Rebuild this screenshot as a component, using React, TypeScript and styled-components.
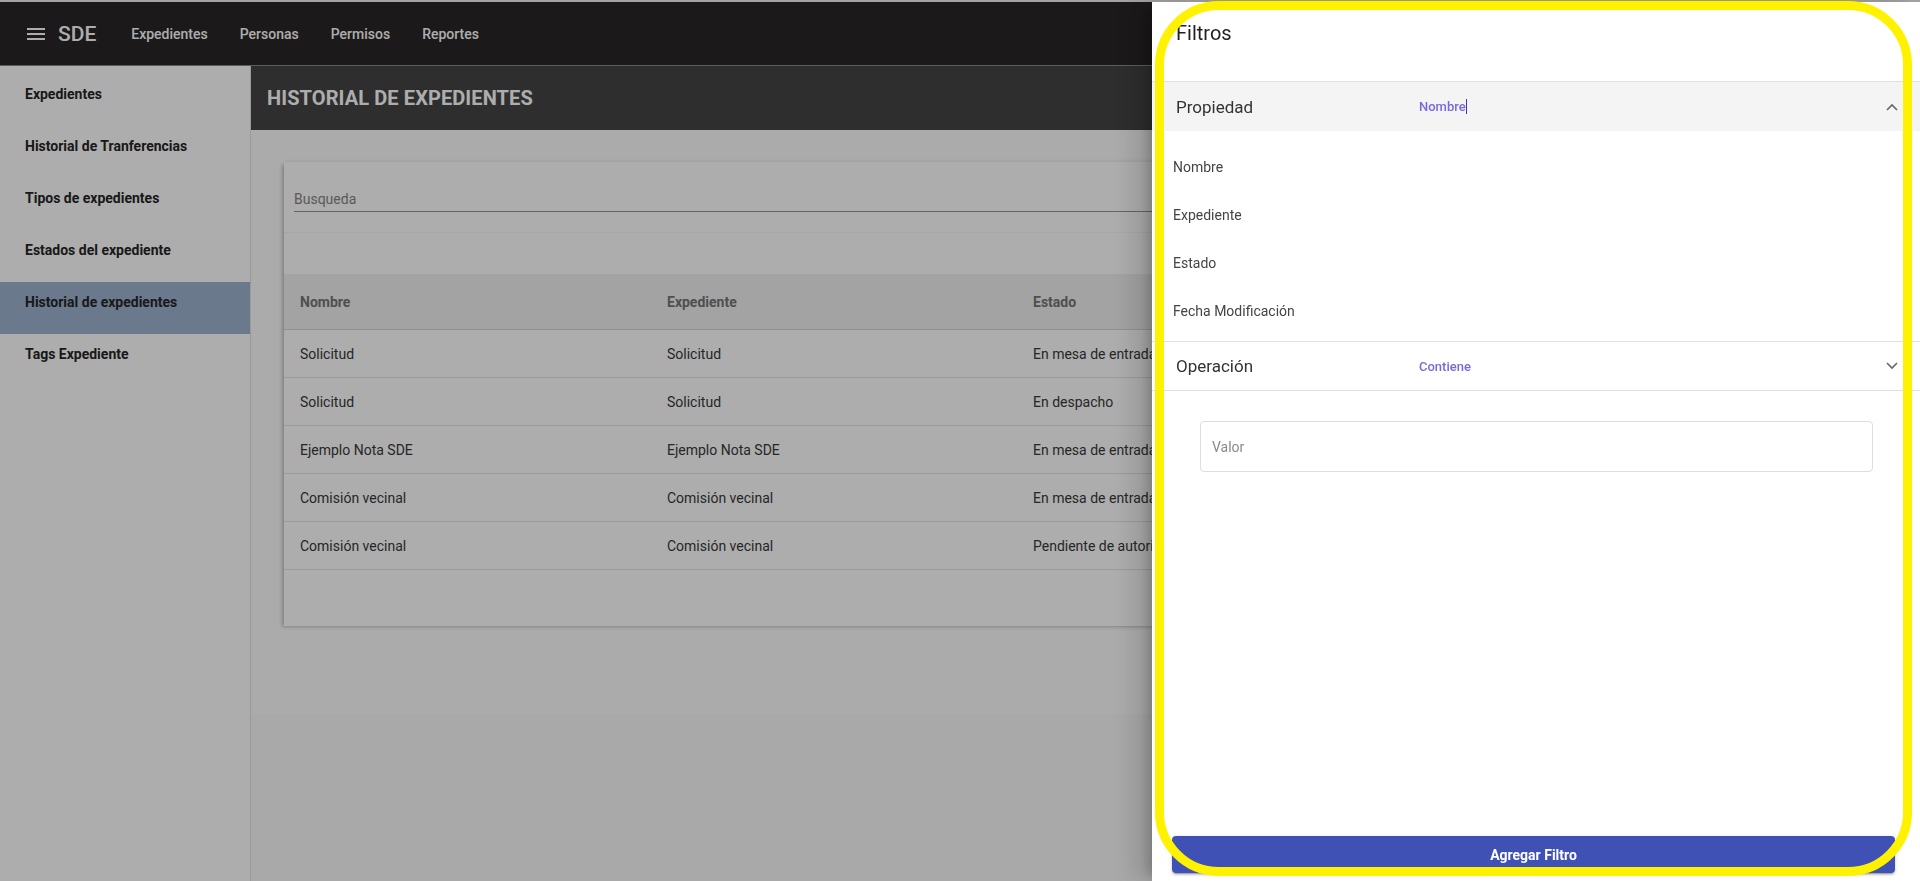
import React from 'react';
import styled, { createGlobalStyle } from 'styled-components';

const GlobalStyle = createGlobalStyle`
  html, body {
    margin: 0;
    padding: 0;
    height: 100%;
    overflow: hidden;
    font-family: Roboto, "Liberation Sans", sans-serif;
  }
  * {
    box-sizing: border-box;
  }
`;

const Page = styled.div`
  height: 881px;
  display: flex;
  flex-direction: column;
  background: #f9f9f9;
`;

const TopStrip = styled.div`
  height: 2px;
  background: #f2f2f2;
`;

const Navbar = styled.header`
  height: 64px;
  background: #282525;
  border-bottom: 1px solid #8a8a8a;
  display: flex;
  align-items: center;
  padding-left: 27px;
  color: #fff;
`;

const Brand = styled.span`
  font-size: 21px;
  font-weight: 500;
  margin-left: 13px;
  margin-right: 35px;
`;

const NavLink = styled.a`
  font-size: 14px;
  font-weight: 500;
  color: #fff;
  margin-right: 32px;
  text-decoration: none;
`;

const Body = styled.div`
  flex: 1;
  display: flex;
  min-height: 0;
`;

const Sidebar = styled.nav`
  width: 251px;
  background: #fff;
  border-right: 1px solid #e4e4e4;
  padding-top: 8px;
`;

const SideItem = styled.div<{ active?: boolean }>`
  height: 52px;
  padding: 12px 25px 0;
  line-height: 16px;
  font-size: 14px;
  font-weight: 700;
  color: #262626;
  background: ${(p) => (p.active ? '#9db3ce' : 'transparent')};
`;

const Main = styled.main`
  flex: 1;
  display: flex;
  flex-direction: column;
  min-width: 0;
`;

const TitleBar = styled.div`
  height: 64px;
  background: #444;
  display: flex;
  align-items: center;
  padding-left: 16px;
`;

const Title = styled.h1`
  margin: 0;
  font-size: 20px;
  font-weight: 700;
  color: #fff;
  letter-spacing: 0.1px;
`;

const Content = styled.div`
  height: 584px;
  background: #fdfdfd;
  padding: 32px 33px 0;
  overflow: hidden;
`;

const Card = styled.section`
  background: #fff;
  box-shadow: -3px 2px 4px -1px rgba(0, 0, 0, 0.22), 0 -1px 4px rgba(0, 0, 0, 0.08);
  padding-bottom: 56px;
`;

const SearchWrap = styled.div`
  padding: 24px 10px 0;
`;

const SearchInput = styled.input`
  width: 100%;
  height: 26px;
  border: none;
  border-bottom: 1px solid #949494;
  background: transparent;
  font-family: Roboto, sans-serif;
  font-size: 14px;
  padding: 0;
  outline: none;
  &::placeholder {
    color: #858585;
  }
`;

const Toolbar = styled.div`
  height: 42px;
  margin-top: 20px;
  background: #fff;
  border-top: 1px solid #f6f6f6;
`;

const Row = styled.div<{ head?: boolean }>`
  display: grid;
  grid-template-columns: 367px 366px 366px 1fr;
  height: ${(p) => (p.head ? '56px' : '48px')};
  align-items: center;
  background: ${(p) => (p.head ? '#f0f0f0' : '#fff')};
  border-bottom: 1px solid ${(p) => (p.head ? '#d6d6d6' : '#e3e3e3')};
  font-size: 14px;
  font-weight: ${(p) => (p.head ? 700 : 400)};
  color: ${(p) => (p.head ? '#757575' : '#383838')};
`;

const Cell = styled.div`
  padding-left: 16px;
  white-space: nowrap;
  overflow: hidden;
`;

const Backdrop = styled.div`
  position: fixed;
  inset: 0;
  background: rgba(0, 0, 0, 0.32);
`;

const Drawer = styled.aside`
  position: fixed;
  top: 2px;
  right: 0;
  bottom: 0;
  width: 768px;
  background: #fff;
  display: flex;
  flex-direction: column;
  box-shadow: -8px 0 10px -5px rgba(0, 0, 0, 0.2), -16px 0 24px 2px rgba(0, 0, 0, 0.14);
`;

const DrawerTitle = styled.div`
  height: 80px;
  padding: 19px 24px 0;
  font-size: 20px;
  line-height: 24px;
  color: #222;
  border-bottom: 1px solid #e0e0e0;
`;

const PanelHeader = styled.div<{ open?: boolean }>`
  height: 49px;
  display: flex;
  align-items: center;
  padding: 0 22px 0 24px;
  background: ${(p) => (p.open ? '#f4f4f4' : '#fff')};
  border-bottom: ${(p) => (p.open ? 'none' : '1px solid #e0e0e0')};
`;

const PanelLabel = styled.span`
  width: 243px;
  font-size: 17px;
  color: #333;
`;

const PanelValue = styled.span`
  flex: 1;
  font-size: 13px;
  font-weight: 500;
  color: #7b68de;
`;

const Caret = styled.span`
  display: inline-block;
  width: 1px;
  height: 15px;
  background: #3a3aa0;
  vertical-align: -3px;
`;

const PanelBody = styled.div`
  padding: 12px 0 6px;
  border-bottom: 1px solid #e0e0e0;
`;

const Option = styled.div`
  height: 48px;
  display: flex;
  align-items: center;
  padding-left: 21px;
  font-size: 14px;
  color: #444;
`;

const ValueWrap = styled.div`
  padding: 30px 47px 0 48px;
`;

const ValueInput = styled.input`
  width: 100%;
  height: 51px;
  border: 1px solid #dedede;
  border-radius: 4px;
  padding: 0 11px;
  font-family: Roboto, sans-serif;
  font-size: 14px;
  outline: none;
  &::placeholder {
    color: #8a8a8a;
  }
`;

const Spacer = styled.div`
  flex: 1;
`;

const AddButton = styled.button`
  height: 37px;
  margin: 0 25px 8px 20px;
  border: none;
  border-radius: 4px;
  background: #3f51b5;
  color: #fff;
  font-family: Roboto, sans-serif;
  font-size: 14px;
  font-weight: 700;
  box-shadow: 0 3px 1px -2px rgba(0, 0, 0, 0.2), 0 2px 2px rgba(0, 0, 0, 0.14), 0 1px 5px rgba(0, 0, 0, 0.12);
`;

const Highlight = styled.div`
  position: fixed;
  left: 1155px;
  top: 1px;
  width: 757px;
  height: 875px;
  border: 9px solid #fff200;
  border-radius: 64px;
  pointer-events: none;
`;

const Menu = () => (
  <svg width="18" height="12" viewBox="0 0 18 12">
    <path d="M0 1h18M0 6h18M0 11h18" stroke="#fff" strokeWidth="2" />
  </svg>
);

const Chevron = ({ up }: { up?: boolean }) => (
  <svg width="12" height="8" viewBox="0 0 12 8">
    <path
      d={up ? 'M1 7l5-5 5 5' : 'M1 1l5 5 5-5'}
      fill="none"
      stroke="#666"
      strokeWidth="1.6"
    />
  </svg>
);

const rows = [
  ['Solicitud', 'Solicitud', 'En mesa de entrada', '12/03/2021'],
  ['Solicitud', 'Solicitud', 'En despacho', '12/03/2021'],
  ['Ejemplo Nota SDE', 'Ejemplo Nota SDE', 'En mesa de entrada', '10/03/2021'],
  ['Comisión vecinal', 'Comisión vecinal', 'En mesa de entrada', '08/03/2021'],
  ['Comisión vecinal', 'Comisión vecinal', 'Pendiente de autorización', '08/03/2021'],
];

const sideItems = [
  'Expedientes',
  'Historial de Tranferencias',
  'Tipos de expedientes',
  'Estados del expediente',
  'Historial de expedientes',
  'Tags Expediente',
];

const App: React.FC = () => {
  return (
    <>
      <GlobalStyle />
      <Page>
        <TopStrip />
        <Navbar>
          <Menu />
          <Brand>SDE</Brand>
          <NavLink>Expedientes</NavLink>
          <NavLink>Personas</NavLink>
          <NavLink>Permisos</NavLink>
          <NavLink>Reportes</NavLink>
        </Navbar>
        <Body>
          <Sidebar>
            {sideItems.map((item) => (
              <SideItem key={item} active={item === 'Historial de expedientes'}>
                {item}
              </SideItem>
            ))}
          </Sidebar>
          <Main>
            <TitleBar>
              <Title>HISTORIAL DE EXPEDIENTES</Title>
            </TitleBar>
            <Content>
              <Card>
                <SearchWrap>
                  <SearchInput placeholder="Busqueda" />
                </SearchWrap>
                <Toolbar />
                <Row head>
                  <Cell>Nombre</Cell>
                  <Cell>Expediente</Cell>
                  <Cell>Estado</Cell>
                  <Cell>Fecha Modificación</Cell>
                </Row>
                {rows.map((r, i) => (
                  <Row key={i}>
                    {r.map((c, j) => (
                      <Cell key={j}>{c}</Cell>
                    ))}
                  </Row>
                ))}
              </Card>
            </Content>
          </Main>
        </Body>
      </Page>
      <Backdrop />
      <Drawer>
        <DrawerTitle>Filtros</DrawerTitle>
        <PanelHeader open>
          <PanelLabel>Propiedad</PanelLabel>
          <PanelValue>
            Nombre
            <Caret />
          </PanelValue>
          <Chevron up />
        </PanelHeader>
        <PanelBody>
          <Option>Nombre</Option>
          <Option>Expediente</Option>
          <Option>Estado</Option>
          <Option>Fecha Modificación</Option>
        </PanelBody>
        <PanelHeader>
          <PanelLabel>Operación</PanelLabel>
          <PanelValue>Contiene</PanelValue>
          <Chevron />
        </PanelHeader>
        <ValueWrap>
          <ValueInput placeholder="Valor" />
        </ValueWrap>
        <Spacer />
        <AddButton>Agregar Filtro</AddButton>
      </Drawer>
      <Highlight />
    </>
  );
};

export default App;
